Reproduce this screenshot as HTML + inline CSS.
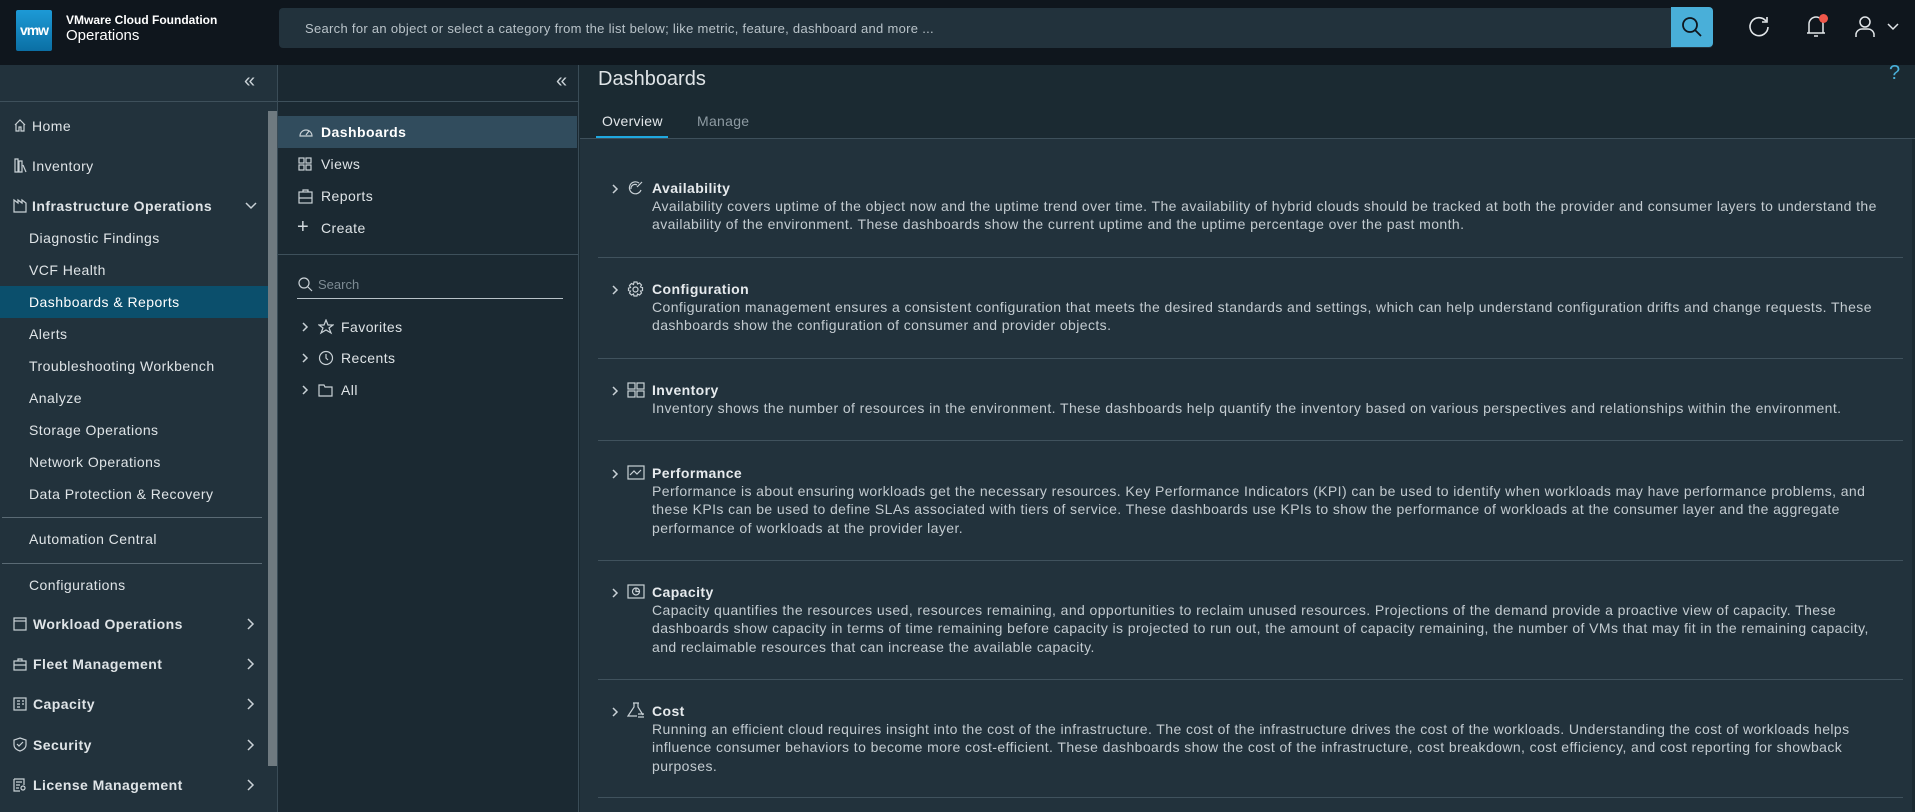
<!DOCTYPE html>
<html><head><meta charset="utf-8"><style>
*{margin:0;padding:0;box-sizing:border-box}
body{width:1915px;height:812px;overflow:hidden;background:#1b2a32;font-family:"Liberation Sans",sans-serif;color:#e3e7ea;position:relative}
.a{position:absolute;white-space:nowrap}
.hdr{left:0;top:0;width:1915px;height:65px;background:#0f161d}
.nav{left:0;top:65px;width:277px;height:747px;background:#22323c}
.p2{left:277px;top:65px;width:301px;height:747px;background:#1b2932;border-left:1px solid #3a4c57}
.main{left:578px;top:65px;width:1337px;height:747px;background:#1b2a32;border-left:1px solid #3a4c57}
.ni{font-size:14px;color:#dfe4e7;line-height:18px;letter-spacing:0.45px}
.b{font-weight:bold}
.ic{position:absolute;stroke:#c9d1d6;fill:none;stroke-width:1.2}
.sec{font-size:14px;color:#c3cbd0;line-height:18.4px;letter-spacing:0.41px}
.hl{height:1px;background:#40525d}
.chev{stroke:#c9d1d6;fill:none;stroke-width:1.5}
</style></head><body>
<div class="a hdr"></div>
<div class="a" style="left:16px;top:10px;width:36px;height:41px;background:linear-gradient(#1d9ad6,#0b6fa4);border-radius:2px;color:#fff;font-size:14px;font-weight:bold;text-align:center;line-height:41px;letter-spacing:-1px">vmw</div>
<div class="a" style="left:66px;top:13px;font-size:12px;font-weight:bold;color:#fff">VMware Cloud Foundation</div>
<div class="a" style="left:66px;top:27px;font-size:15px;color:#fff">Operations</div>
<div class="a" style="left:279px;top:8px;width:1434px;height:40px;background:#22323c;border-radius:4px"></div>
<div class="a" style="left:305px;top:21px;font-size:13px;color:#b9c3c9;letter-spacing:0.3px">Search for an object or select a category from the list below; like metric, feature, dashboard and more ...</div>
<div class="a" style="left:1671px;top:7px;width:42px;height:40px;background:#49afd9;border-radius:0 4px 4px 0"></div>
<svg class="ic" style="left:1680px;top:15px;stroke:#0f161d;stroke-width:1.8" width="24" height="24"><circle cx="10" cy="10" r="7"/><path d="M15 15l6 6"/></svg>
<svg class="ic" style="left:1746px;top:14px;stroke:#e3e7ea;stroke-width:1.6" width="26" height="26"><path d="M20 7A9 9 0 1 0 22 13"/><path d="M21 3v5h-5"/></svg>
<svg class="ic" style="left:1803px;top:12px;stroke:#e3e7ea;stroke-width:1.5" width="26" height="28"><path d="M6 21V12a7 7 0 0 1 14 0v9H4h18"/><path d="M11 24h4"/></svg>
<div class="a" style="left:1819px;top:14px;width:9px;height:9px;background:#f0574a;border-radius:50%"></div>
<svg class="ic" style="left:1853px;top:14px;stroke:#e3e7ea;stroke-width:1.5" width="24" height="26"><circle cx="12" cy="8" r="5"/><path d="M3 23v-3a6 6 0 0 1 6-5h6a6 6 0 0 1 6 5v3"/></svg>
<svg class="ic chev" style="left:1886px;top:22px;stroke:#e3e7ea" width="14" height="10"><path d="M2 2l5 5 5-5"/></svg>

<div class="a nav"></div>
<div class="a hl" style="left:0;top:101px;width:277px;background:#3e505b"></div>
<div class="a" style="left:244px;top:70px;font-size:20px;color:#c9d1d6">«</div>
<div class="a" style="left:268px;top:111px;width:9px;height:655px;background:#6f7a80"></div>
<div class="a" style="left:0;top:286px;width:268px;height:32px;background:#0b4f6c"></div>
<svg class="ic" style="left:13px;top:118px" width="14" height="14"><path d="M2 7l5-5 5 5M3 6v7h3v-4h2v4h3V6"/></svg>
<div class="a ni" style="left:32px;top:117px">Home</div>
<svg class="ic" style="left:13px;top:157px" width="14" height="16"><path d="M2 2h3v13H2zM6 4h3v11H6zM10 8l3 7"/></svg>
<div class="a ni" style="left:32px;top:157px">Inventory</div>
<svg class="ic" style="left:13px;top:197px" width="14" height="16"><path d="M1 15V3l4 3V3l4 3V3l4 3v9z"/></svg>
<div class="a ni b" style="left:32px;top:197px">Infrastructure Operations</div>
<svg class="ic chev" style="left:244px;top:201px" width="14" height="10"><path d="M2 2l5 5 5-5"/></svg>
<div class="a ni" style="left:29px;top:229px">Diagnostic Findings</div>
<div class="a ni" style="left:29px;top:261px">VCF Health</div>
<div class="a ni" style="left:29px;top:293px;color:#fff">Dashboards &amp; Reports</div>
<div class="a ni" style="left:29px;top:325px">Alerts</div>
<div class="a ni" style="left:29px;top:357px">Troubleshooting Workbench</div>
<div class="a ni" style="left:29px;top:389px">Analyze</div>
<div class="a ni" style="left:29px;top:421px">Storage Operations</div>
<div class="a ni" style="left:29px;top:453px">Network Operations</div>
<div class="a ni" style="left:29px;top:485px">Data Protection &amp; Recovery</div>
<div class="a hl" style="left:2px;top:517px;width:260px;background:#5a6a74"></div>
<div class="a ni" style="left:29px;top:530px">Automation Central</div>
<div class="a hl" style="left:2px;top:563px;width:260px;background:#5a6a74"></div>
<div class="a ni" style="left:29px;top:576px">Configurations</div>
<div class="a ni b" style="left:33px;top:615px">Workload Operations</div>
<div class="a ni b" style="left:33px;top:655px">Fleet Management</div>
<div class="a ni b" style="left:33px;top:695px">Capacity</div>
<div class="a ni b" style="left:33px;top:736px">Security</div>
<div class="a ni b" style="left:33px;top:776px">License Management</div>
<svg class="ic" style="left:13px;top:617px" width="14" height="14"><rect x="1" y="1" width="12" height="12"/><path d="M1 4h12"/></svg>
<svg class="ic" style="left:13px;top:657px" width="14" height="14"><rect x="1" y="4" width="12" height="9"/><path d="M5 4V2h4v2M1 8h12"/></svg>
<svg class="ic" style="left:13px;top:697px" width="14" height="14"><rect x="1" y="1" width="12" height="12"/><path d="M4 4h3M4 7h3M4 10h3M9 4h2M9 7h2"/></svg>
<svg class="ic" style="left:13px;top:737px" width="14" height="15"><path d="M7 1l6 2v5c0 3-3 5-6 6-3-1-6-3-6-6V3z"/><path d="M4 7l2 2 4-4"/></svg>
<svg class="ic" style="left:13px;top:778px" width="14" height="14"><path d="M1 1h10v6M1 1v12h6M3 4h6M3 7h4M3 10h3"/><circle cx="10" cy="10" r="2"/></svg>
<svg class="ic chev" style="left:246px;top:617px" width="10" height="14"><path d="M2 2l5 5-5 5"/></svg>
<svg class="ic chev" style="left:246px;top:657px" width="10" height="14"><path d="M2 2l5 5-5 5"/></svg>
<svg class="ic chev" style="left:246px;top:697px" width="10" height="14"><path d="M2 2l5 5-5 5"/></svg>
<svg class="ic chev" style="left:246px;top:738px" width="10" height="14"><path d="M2 2l5 5-5 5"/></svg>
<svg class="ic chev" style="left:246px;top:778px" width="10" height="14"><path d="M2 2l5 5-5 5"/></svg>

<div class="a p2"></div>
<div class="a hl" style="left:278px;top:101px;width:300px;background:#3e505b"></div>
<div class="a" style="left:556px;top:70px;font-size:20px;color:#c9d1d6">«</div>
<div class="a" style="left:278px;top:116px;width:299px;height:32px;background:#314c5d"></div>
<svg class="ic" style="left:298px;top:124px" width="16" height="16"><path d="M2 12a6 6 0 1 1 12 0z"/><path d="M8 11l3-4"/></svg>
<div class="a ni b" style="left:321px;top:123px;color:#fff">Dashboards</div>
<svg class="ic" style="left:298px;top:157px" width="15" height="15"><rect x="1" y="1" width="5" height="5"/><rect x="8" y="1" width="5" height="5"/><rect x="1" y="8" width="5" height="5"/><rect x="8" y="8" width="5" height="5"/></svg>
<div class="a ni" style="left:321px;top:155px">Views</div>
<svg class="ic" style="left:298px;top:189px" width="15" height="15"><rect x="1" y="3" width="13" height="11"/><path d="M5 3V1h5v2M1 9h13"/></svg>
<div class="a ni" style="left:321px;top:187px">Reports</div>
<div class="a" style="left:297px;top:216px;font-size:20px;color:#d2d9dd;line-height:22px">+</div>
<div class="a ni" style="left:321px;top:219px">Create</div>
<div class="a hl" style="left:278px;top:254px;width:300px;background:#3e505b"></div>
<svg class="ic" style="left:297px;top:276px" width="16" height="16"><circle cx="7" cy="7" r="5"/><path d="M11 11l4 4"/></svg>
<div class="a" style="left:318px;top:277px;font-size:13px;color:#7d8b93">Search</div>
<div class="a hl" style="left:297px;top:298px;width:266px;background:#b8c2c8"></div>
<svg class="ic chev" style="left:302px;top:321px" width="8" height="12"><path d="M1 2l4 4-4 4"/></svg>
<svg class="ic" style="left:318px;top:319px" width="16" height="16"><path d="M8 1l2 5h5l-4 3 2 5-5-3-5 3 2-5-4-3h5z"/></svg>
<div class="a ni" style="left:341px;top:318px">Favorites</div>
<svg class="ic chev" style="left:302px;top:352px" width="8" height="12"><path d="M1 2l4 4-4 4"/></svg>
<svg class="ic" style="left:318px;top:350px" width="16" height="16"><circle cx="8" cy="8" r="6.5"/><path d="M8 4v4l2 2"/></svg>
<div class="a ni" style="left:341px;top:349px">Recents</div>
<svg class="ic chev" style="left:302px;top:384px" width="8" height="12"><path d="M1 2l4 4-4 4"/></svg>
<svg class="ic" style="left:318px;top:382px" width="16" height="16"><path d="M1 3h5l1 2h7v9H1z"/></svg>
<div class="a ni" style="left:341px;top:381px">All</div>

<div class="a main"></div>
<div class="a" style="left:598px;top:68px;font-size:20px;color:#dfe4e7">Dashboards</div>
<div class="a" style="left:1889px;top:62px;font-size:20px;color:#49afd9">?</div>
<div class="a" style="left:602px;top:113px;font-size:14px;color:#e3e7ea;letter-spacing:0.3px">Overview</div>
<div class="a" style="left:697px;top:113px;font-size:14px;color:#8e9ba3;letter-spacing:0.3px">Manage</div>
<div class="a" style="left:596px;top:136px;width:72px;height:3px;background:#1fa8e0"></div>
<div class="a hl" style="left:580px;top:138px;width:1335px;background:#3e505b"></div>
<div class="a" style="left:580px;top:139px;width:1332px;height:673px;background:#22323c"></div>

<div class="a hl" style="left:598px;top:257px;width:1305px"></div>
<div class="a hl" style="left:598px;top:358px;width:1305px"></div>
<div class="a hl" style="left:598px;top:440px;width:1305px"></div>
<div class="a hl" style="left:598px;top:560px;width:1305px"></div>
<div class="a hl" style="left:598px;top:679px;width:1305px"></div>
<div class="a hl" style="left:598px;top:797px;width:1305px"></div>

<svg class="ic chev" style="left:612px;top:183px" width="8" height="12"><path d="M1 2l4 4-4 4"/></svg>
<svg class="ic" style="left:627px;top:180px" width="18" height="16"><path d="M12 3A6 6 0 1 0 14 10"/><path d="M4 9a4 4 0 0 1 6-4M10 7l5-5"/></svg>
<div class="a sec b" style="left:652px;top:179px;color:#e6eaed">Availability</div>
<div class="a sec" style="left:652px;top:197px">Availability covers uptime of the object now and the uptime trend over time. The availability of hybrid clouds should be tracked at both the provider and consumer layers to understand the<br>availability of the environment. These dashboards show the current uptime and the uptime percentage over the past month.</div>

<svg class="ic chev" style="left:612px;top:284px" width="8" height="12"><path d="M1 2l4 4-4 4"/></svg>
<svg class="ic" style="left:627px;top:281px" width="17" height="17"><circle cx="8.5" cy="8.5" r="2.5"/><path d="M7 1h3l.5 2 2-1 2 2-1 2 2 .5v3l-2 .5 1 2-2 2-2-1-.5 2H7l-.5-2-2 1-2-2 1-2-2-.5V7l2-.5-1-2 2-2 2 1z"/></svg>
<div class="a sec b" style="left:652px;top:280px;color:#e6eaed">Configuration</div>
<div class="a sec" style="left:652px;top:298px">Configuration management ensures a consistent configuration that meets the desired standards and settings, which can help understand configuration drifts and change requests. These<br>dashboards show the configuration of consumer and provider objects.</div>

<svg class="ic chev" style="left:612px;top:385px" width="8" height="12"><path d="M1 2l4 4-4 4"/></svg>
<svg class="ic" style="left:627px;top:382px" width="18" height="16"><rect x="1" y="1" width="7" height="6"/><rect x="10" y="1" width="7" height="6"/><rect x="1" y="9" width="7" height="6"/><rect x="10" y="9" width="7" height="6"/></svg>
<div class="a sec b" style="left:652px;top:381px;color:#e6eaed">Inventory</div>
<div class="a sec" style="left:652px;top:399px">Inventory shows the number of resources in the environment. These dashboards help quantify the inventory based on various perspectives and relationships within the environment.</div>

<svg class="ic chev" style="left:612px;top:468px" width="8" height="12"><path d="M1 2l4 4-4 4"/></svg>
<svg class="ic" style="left:627px;top:465px" width="18" height="16"><rect x="1" y="1" width="16" height="13"/><path d="M3 10l4-4 3 3 4-4"/></svg>
<div class="a sec b" style="left:652px;top:464px;color:#e6eaed">Performance</div>
<div class="a sec" style="left:652px;top:482px">Performance is about ensuring workloads get the necessary resources. Key Performance Indicators (KPI) can be used to identify when workloads may have performance problems, and<br>these KPIs can be used to define SLAs associated with tiers of service. These dashboards use KPIs to show the performance of workloads at the consumer layer and the aggregate<br>performance of workloads at the provider layer.</div>

<svg class="ic chev" style="left:612px;top:587px" width="8" height="12"><path d="M1 2l4 4-4 4"/></svg>
<svg class="ic" style="left:627px;top:584px" width="18" height="16"><rect x="1" y="1" width="16" height="13"/><circle cx="9" cy="7.5" r="3.5"/><path d="M9 4v3.5h3.5"/></svg>
<div class="a sec b" style="left:652px;top:583px;color:#e6eaed">Capacity</div>
<div class="a sec" style="left:652px;top:601px">Capacity quantifies the resources used, resources remaining, and opportunities to reclaim unused resources. Projections of the demand provide a proactive view of capacity. These<br>dashboards show capacity in terms of time remaining before capacity is projected to run out, the amount of capacity remaining, the number of VMs that may fit in the remaining capacity,<br>and reclaimable resources that can increase the available capacity.</div>

<svg class="ic chev" style="left:612px;top:706px" width="8" height="12"><path d="M1 2l4 4-4 4"/></svg>
<svg class="ic" style="left:627px;top:702px" width="18" height="18"><path d="M6 1h6M7 1v4L1 14h9M11 1v4l5 8"/><path d="M11 12h6M11 15h6"/></svg>
<div class="a sec b" style="left:652px;top:702px;color:#e6eaed">Cost</div>
<div class="a sec" style="left:652px;top:720px">Running an efficient cloud requires insight into the cost of the infrastructure. The cost of the infrastructure drives the cost of the workloads. Understanding the cost of workloads helps<br>influence consumer behaviors to become more cost-efficient. These dashboards show the cost of the infrastructure, cost breakdown, cost efficiency, and cost reporting for showback<br>purposes.</div>
</body></html>
